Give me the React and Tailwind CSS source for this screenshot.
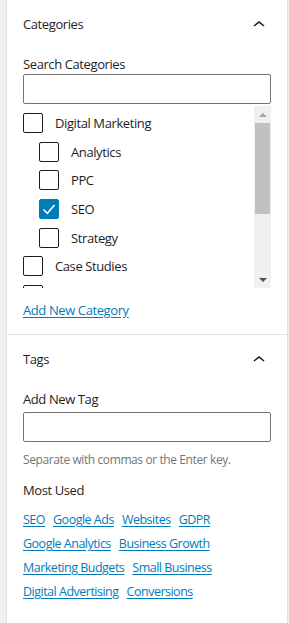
import React, { useState } from "react";

// chevron used in the panel headers
const ChevronUp = () => (
  <svg width="24" height="24" viewBox="0 0 24 24" className="text-[#1e1e1e]">
    <path d="M6.5 12.4L12 8l5.5 4.4-.9 1.2L12 10l-4.6 3.6-1-1.2z" fill="currentColor" />
  </svg>
);

// square checkbox, filled blue when checked
const Box = ({ checked }) => (
  <span
    className={
      checked
        ? "w-[20px] h-[20px] shrink-0 rounded-[2px] bg-[#007cba] border border-[#007cba] flex items-center justify-center"
        : "w-[20px] h-[20px] shrink-0 rounded-[2px] bg-white border border-[#1e1e1e]"
    }
  >
    {checked && (
      <svg width="18" height="18" viewBox="0 0 18 18">
        <path d="M3.5 9.5l3.8 3.8L14.5 5" stroke="white" strokeWidth="1.6" fill="none" />
      </svg>
    )}
  </span>
);

const categories = [
  { name: "Digital Marketing", level: 0 },
  { name: "Analytics", level: 1 },
  { name: "PPC", level: 1 },
  { name: "SEO", level: 1, checked: true },
  { name: "Strategy", level: 1 },
  { name: "Case Studies", level: 0 },
  { name: "News", level: 0 },
];

const mostUsed = [
  ["SEO", "Google Ads", "Websites", "GDPR"],
  ["Google Analytics", "Business Growth"],
  ["Marketing Budgets", "Small Business"],
  ["Digital Advertising", "Conversions"],
];

export default function App() {
  const [search, setSearch] = useState("");
  const [tag, setTag] = useState("");

  return (
    <div
      className="w-[289px] h-[623px] bg-[#f0f0f0] pl-[6px] pr-[1px] overflow-hidden text-[13px] text-[#1e1e1e]"
      style={{ fontFamily: '"Open Sans", "Noto Sans", sans-serif' }}
    >
      <div className="h-full bg-white border-l border-r border-[#e0e0e0] tracking-[-0.4px]">
        {/* Categories panel */}
        <div className="border-b border-[#e0e0e0] px-4 pb-[16px]">
          <div className="h-[50px] flex items-center justify-between">
            <span className="font-medium">Categories</span>
            <ChevronUp />
          </div>
          <label className="block leading-[16px] mt-[6px] mb-[2px]">Search Categories</label>
          <input
            value={search}
            onChange={(e) => setSearch(e.target.value)}
            className="block w-full h-[30px] border border-[#757575] rounded-[2px] px-2 outline-none"
          />
          <div className="mt-[2px] h-[182px] flex overflow-hidden">
            <div className="flex-1 pt-[7px] flex flex-col gap-[8.7px]">
              {categories.map((c) => (
                <div
                  key={c.name}
                  className={c.level ? "flex items-center gap-[12px] pl-[16px] h-[20px] shrink-0" : "flex items-center gap-[12px] h-[20px] shrink-0"}
                >
                  <Box checked={c.checked} />
                  <span className="leading-[20px]">{c.name === "News" ? "" : c.name}</span>
                </div>
              ))}
            </div>
            {/* scrollbar */}
            <div className="w-[17px] bg-[#f0f0f0] flex flex-col items-center">
              <div className="h-[17px] flex items-center justify-center">
                <span className="w-0 h-0 border-l-[4px] border-r-[4px] border-b-[4px] border-l-transparent border-r-transparent border-b-[#a3a3a3]" />
              </div>
              <div className="w-[15px] h-[91px] bg-[#c1c1c1]" />
              <div className="flex-1" />
              <div className="h-[17px] flex items-center justify-center">
                <span className="w-0 h-0 border-l-[4px] border-r-[4px] border-t-[4px] border-l-transparent border-r-transparent border-t-[#505050]" />
              </div>
            </div>
          </div>
          <a href="#" className="block mt-[14px] leading-[16px] text-[#007cba] underline underline-offset-2">
            Add New Category
          </a>
        </div>

        {/* Tags panel */}
        <div className="px-4">
          <div className="h-[50px] flex items-center justify-between">
            <span className="font-medium">Tags</span>
            <ChevronUp />
          </div>
          <label className="block leading-[16px] mt-[6px] mb-[5px]">Add New Tag</label>
          <input
            value={tag}
            onChange={(e) => setTag(e.target.value)}
            className="block w-full h-[30px] border border-[#757575] rounded-[2px] px-2 outline-none"
          />
          <p className="mt-[10px] text-[12px] leading-[16px] text-[#757575]">
            Separate with commas or the Enter key.
          </p>
          <p className="mt-[14px] leading-[16px]">Most Used</p>
          <div className="mt-[14px] flex flex-col gap-[8px]">
            {mostUsed.map((row, i) => (
              <div key={i} className="flex gap-[8px] leading-[16px] text-[12.5px] tracking-[-0.5px]">
                {row.map((t) => (
                  <a key={t} href="#" className="text-[#007cba] underline underline-offset-2">
                    {t}
                  </a>
                ))}
              </div>
            ))}
          </div>
        </div>
      </div>
    </div>
  );
}
